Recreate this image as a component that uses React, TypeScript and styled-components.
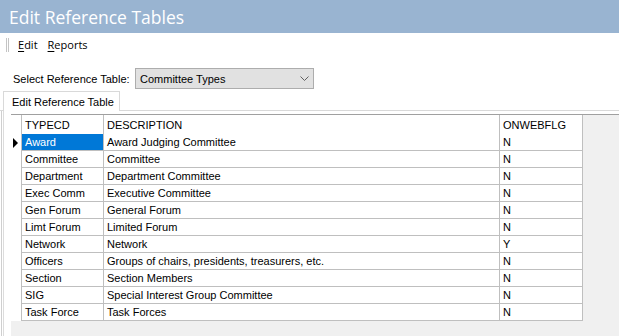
import styled, { createGlobalStyle } from "styled-components";

interface RefRow {
    code: string
    description: string
    onWeb: string
}

const rows: Array<RefRow> = [
    {code: "Award", description: "Award Judging Committee", onWeb: "N"},
    {code: "Committee", description: "Committee", onWeb: "N"},
    {code: "Department", description: "Department Committee", onWeb: "N"},
    {code: "Exec Comm", description: "Executive Committee", onWeb: "N"},
    {code: "Gen Forum", description: "General Forum", onWeb: "N"},
    {code: "Limt Forum", description: "Limited Forum", onWeb: "N"},
    {code: "Network", description: "Network", onWeb: "Y"},
    {code: "Officers", description: "Groups of chairs, presidents, treasurers, etc.", onWeb: "N"},
    {code: "Section", description: "Section Members", onWeb: "N"},
    {code: "SIG", description: "Special Interest Group Committee", onWeb: "N"},
    {code: "Task Force", description: "Task Forces", onWeb: "N"},
]

const GlobalStyle = createGlobalStyle`
  html, body {
    margin: 0;
    padding: 0;
    background: #fff;
  }
  body {
    font-family: "Liberation Sans", Arial, sans-serif;
    font-size: 11px;
    color: #000;
    overflow: hidden;
  }
`

const Window = styled.div`
  width: 619px;
  height: 336px;
  display: flex;
  flex-direction: column;
  overflow: hidden;
`

const TitleBar = styled.div`
  height: 33px;
  flex: none;
  background: #99b4d1;
  color: #fff;
  font-family: "Open Sans", "Noto Sans", sans-serif;
  font-size: 17.5px;
  display: flex;
  align-items: center;
  padding-left: 9px;
  box-sizing: border-box;
`

const MenuBar = styled.div`
  height: 23px;
  flex: none;
  display: flex;
  align-items: center;
  padding-left: 6px;
  font-family: "Open Sans", "Noto Sans", sans-serif;
  font-size: 11px;
`

const Grip = styled.div`
  width: 1px;
  height: 14px;
  border-left: 1px solid #c4c4c4;
  border-right: 1px solid #c4c4c4;
  margin-right: 9px;
`

const MenuItem = styled.span`
  margin-right: 10px;

  u {
    text-decoration-thickness: 1px;
    text-underline-offset: 2px;
  }
`

const SelectRow = styled.div`
  display: flex;
  align-items: center;
  margin-top: 12px;
  padding-left: 13px;
  height: 21px;
  flex: none;
`

const SelectLabel = styled.label`
  width: 122px;
`

const SelectBox = styled.div`
  width: 179px;
  height: 21px;
  box-sizing: border-box;
  border: 1px solid #adadad;
  background: #e1e1e1;
  display: flex;
  align-items: center;
  justify-content: space-between;
  padding: 0 4px 0 4px;
`

const TabStrip = styled.div`
  display: flex;
  align-items: flex-end;
  margin-top: 2px;
  flex: none;
`

const TabEdge = styled.div<{ $grow?: boolean }>`
  width: 3px;
  flex: ${p => p.$grow ? 1 : "none"};
  border-bottom: 1px solid #d9d9d9;
`

const Tab = styled.div`
  width: 117px;
  height: 20px;
  box-sizing: border-box;
  border: 1px solid #d9d9d9;
  border-bottom: none;
  background: #fff;
  padding-left: 8px;
  display: flex;
  align-items: center;
`

const Panel = styled.div`
  flex: 1;
  display: flex;
  flex-direction: column;
  margin-left: 1px;
  border-left: 1px solid #cfcfcf;
  box-shadow: inset 1px 0 0 #fff, inset 2px 0 0 #dcdcdc;
  padding: 3px 0 0 9px;
  min-height: 0;
`

const Grid = styled.div`
  flex: 1;
  background: #f0f0f0;
  border-top: 1px solid #a0a0a0;
  display: flex;
  flex-direction: column;
`

const Row = styled.div<{ $header?: boolean }>`
  display: flex;
  height: ${p => p.$header ? 19 : 17}px;
  flex: none;
`

const RowHead = styled.div`
  width: 11px;
  box-sizing: border-box;
  background: #fff;
  border-right: 1px solid #bfbfbf;
  display: flex;
  align-items: center;
  padding-left: 2px;
`

const Cell = styled.div<{ $width: number; $header?: boolean; $selected?: boolean }>`
  width: ${p => p.$width}px;
  box-sizing: border-box;
  background: ${p => p.$selected ? "#0078d7" : "#fff"};
  color: ${p => p.$selected ? "#fff" : "#000"};
  border-right: 1px solid #bfbfbf;
  border-bottom: ${p => p.$header ? "none" : "1px solid #bfbfbf"};
  padding-left: 3px;
  display: flex;
  align-items: center;
  white-space: nowrap;
  overflow: hidden;
`

const columns = [82, 396, 83]

const App = () => {
    return (
        <Window>
            <GlobalStyle />
            <TitleBar>Edit Reference Tables</TitleBar>
            <MenuBar>
                <Grip />
                <MenuItem><u>E</u>dit</MenuItem>
                <MenuItem><u>R</u>eports</MenuItem>
            </MenuBar>
            <SelectRow>
                <SelectLabel>Select Reference Table:</SelectLabel>
                <SelectBox>
                    <span>Committee Types</span>
                    <svg width="9" height="6" viewBox="0 0 9 6">
                        <polyline points="0.5,0.5 4.5,4.5 8.5,0.5" fill="none" stroke="#606060" strokeWidth="1" />
                    </svg>
                </SelectBox>
            </SelectRow>
            <TabStrip>
                <TabEdge />
                <Tab>Edit Reference Table</Tab>
                <TabEdge $grow />
            </TabStrip>
            <Panel>
                <Grid>
                    <Row $header>
                        <RowHead />
                        <Cell $width={columns[0]} $header>TYPECD</Cell>
                        <Cell $width={columns[1]} $header>DESCRIPTION</Cell>
                        <Cell $width={columns[2]} $header>ONWEBFLG</Cell>
                    </Row>
                    {rows.map((row, i) => (
                        <Row key={row.code}>
                            <RowHead>
                                {i === 0 && (
                                    <svg width="5" height="10" viewBox="0 0 5 10">
                                        <polygon points="0,0 5,5 0,10" fill="#000" />
                                    </svg>
                                )}
                            </RowHead>
                            <Cell $width={columns[0]} $selected={i === 0}>{row.code}</Cell>
                            <Cell $width={columns[1]}>{row.description}</Cell>
                            <Cell $width={columns[2]}>{row.onWeb}</Cell>
                        </Row>
                    ))}
                </Grid>
            </Panel>
        </Window>
    )
}

export default App;
